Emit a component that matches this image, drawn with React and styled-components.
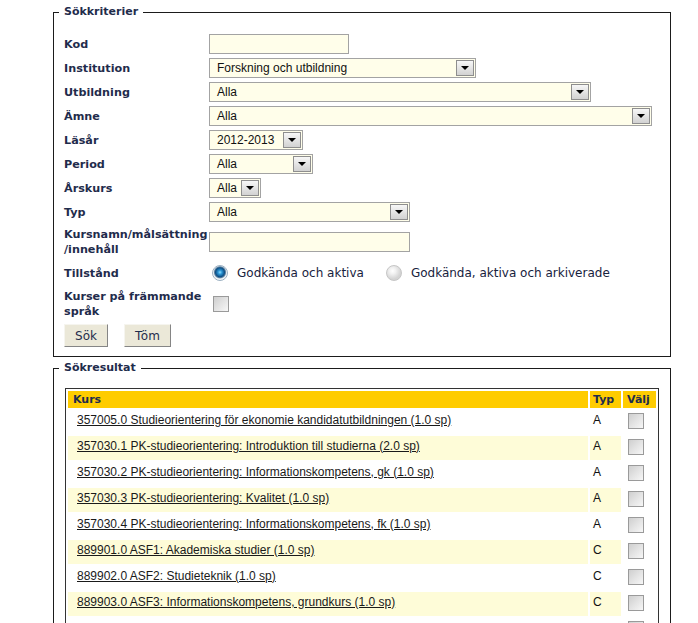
import React from 'react';
import styled, { createGlobalStyle } from 'styled-components';

const Global = createGlobalStyle`
  body {
    margin: 0;
    background: #fff;
    font-family: Verdana, "DejaVu Sans", sans-serif;
  }
`;

const navy = '#1f2c4c';

const Page = styled.div`
  padding-left: 53px;
  width: 618px;
`;

const Fieldset = styled.fieldset`
  width: 618px;
  box-sizing: border-box;
  margin: ${p => p.$top}px 0 0 0;
  padding: ${p => p.$pt}px 10px 9px 10px;
  border: 1px solid #1b1b1b;
  min-width: 0;
`;

const Legend = styled.legend`
  margin-left: -5px;
  padding: 0 5px 0 5px;
  font: bold 11px Verdana, "DejaVu Sans", sans-serif;
  color: ${navy};
  line-height: 14px;
`;

const Row = styled.div`
  display: grid;
  grid-template-columns: 145px auto;
  align-items: center;
  min-height: 24px;
  padding: ${p => p.$pad || '0'};
`;

const Label = styled.div`
  font: bold 11.2px Verdana, "DejaVu Sans", sans-serif;
  line-height: 15px;
  color: ${navy};
  white-space: nowrap;
`;

const Field = styled.div`
  display: flex;
  align-items: center;
`;

const TextInput = styled.div`
  width: ${p => p.$w}px;
  height: 20px;
  box-sizing: border-box;
  border: 1px solid #a3a3a3;
  background: #fffeea;
`;

const SelectBox = styled.div`
  display: flex;
  align-items: center;
  width: ${p => p.$w}px;
  height: 20px;
  box-sizing: border-box;
  border: 1px solid #a3a3a3;
  background: #fffeea;
`;

const SelectText = styled.span`
  flex: 1;
  padding-left: 7px;
  font: 12px Tahoma, "Liberation Sans", sans-serif;
  color: #111;
  white-space: nowrap;
`;

const ArrowBox = styled.span`
  width: 18px;
  height: 16px;
  margin-right: 1px;
  box-sizing: border-box;
  border: 1px solid #8e8e8e;
  background: linear-gradient(#f7f7f7, #d2d2d2);
  display: flex;
  align-items: center;
  justify-content: center;

  &::after {
    content: '';
    border-left: 4px solid transparent;
    border-right: 4px solid transparent;
    border-top: 4px solid #000;
  }
`;

const RadioGroup = styled.div`
  display: flex;
  align-items: center;
  padding-left: 3px;
`;

const RadioItem = styled.label`
  display: flex;
  align-items: center;
  gap: 9px;
  margin-right: 22px;
  font: 12px Verdana, "DejaVu Sans", sans-serif;
  color: #17223d;
`;

const RadioDot = styled.span`
  width: 16px;
  height: 16px;
  box-sizing: border-box;
  border-radius: 50%;
  border: 1px solid ${p => (p.$on ? '#9bb0c2' : '#c6c6c6')};
  background: ${p =>
    p.$on
      ? 'radial-gradient(circle at 50% 45%, #8fdcff 0, #2a95d4 2px, #0d4f86 4.5px, #5a7f9e 5.5px, #e9eef2 6.5px, #ffffff 8px)'
      : 'radial-gradient(circle at 40% 35%, #ffffff 0, #f2f2f2 3px, #d4d4d4 8px)'};
`;

const Check = styled.span`
  display: inline-block;
  width: 16px;
  height: 16px;
  box-sizing: border-box;
  border: 1px solid #9a9a9a;
  background: linear-gradient(135deg, #cfcfcf, #f7f7f7);
  margin-left: ${p => p.$ml || 0}px;
  vertical-align: middle;
`;

const Buttons = styled.div`
  display: flex;
  gap: 16px;
  margin-top: 3px;
`;

const Button = styled.button`
  width: ${p => p.$w}px;
  height: 23px;
  padding: 0;
  background: #ebe8d8;
  border: 1px solid;
  border-color: #f6f5ef #858585 #858585 #f6f5ef;
  font: 12px Verdana, "DejaVu Sans", sans-serif;
  color: ${navy};
`;

const Table = styled.table`
  width: 594px;
  margin-left: 1px;
  border: 1px solid #333;
  border-collapse: separate;
  border-spacing: 2px;
`;

const Th = styled.th`
  height: 16px;
  padding: 0 0 1px ${p => p.$pl}px;
  width: ${p => (p.$w ? `${p.$w}px` : 'auto')};
  background: #ffcc00;
  text-align: left;
  font: bold 11px Verdana, "DejaVu Sans", sans-serif;
  color: ${navy};
`;

const Td = styled.td`
  box-sizing: border-box;
  height: 24px;
  padding: 0 0 ${p => p.$pb}px ${p => p.$pl}px;
  vertical-align: middle;
  background: ${p => (p.$hl ? '#fefcd8' : 'transparent')};
  font: 12px Arial, "Liberation Sans", sans-serif;
  line-height: 14px;
  color: #111;
`;

const CourseLink = styled.a`
  color: #1a1a1a;
  text-decoration: underline;
`;

const courses = [
  ['357005.0 Studieorientering för ekonomie kandidatutbildningen (1.0 sp)', 'A'],
  ['357030.1 PK-studieorientering: Introduktion till studierna (2.0 sp)', 'A'],
  ['357030.2 PK-studieorientering: Informationskompetens, gk (1.0 sp)', 'A'],
  ['357030.3 PK-studieorientering: Kvalitet (1.0 sp)', 'A'],
  ['357030.4 PK-studieorientering: Informationskompetens, fk (1.0 sp)', 'A'],
  ['889901.0 ASF1: Akademiska studier (1.0 sp)', 'C'],
  ['889902.0 ASF2: Studieteknik (1.0 sp)', 'C'],
  ['889903.0 ASF3: Informationskompetens, grundkurs (1.0 sp)', 'C'],
  ['889904.0 ASF4: Informationskompetens, fortsättningskurs (1.0 sp)', 'C'],
];

const Select = ({ w, value }) => (
  <SelectBox $w={w}>
    <SelectText>{value}</SelectText>
    <ArrowBox />
  </SelectBox>
);

export default function App() {
  return (
    <Page>
      <Global />
      <Fieldset $top={5} $pt={13}>
        <Legend>Sökkriterier</Legend>
        <Row>
          <Label>Kod</Label>
          <Field><TextInput $w={140} /></Field>
        </Row>
        <Row>
          <Label>Institution</Label>
          <Field><Select w={267} value="Forskning och utbildning" /></Field>
        </Row>
        <Row>
          <Label>Utbildning</Label>
          <Field><Select w={382} value="Alla" /></Field>
        </Row>
        <Row>
          <Label>Ämne</Label>
          <Field><Select w={443} value="Alla" /></Field>
        </Row>
        <Row>
          <Label>Läsår</Label>
          <Field><Select w={94} value="2012-2013" /></Field>
        </Row>
        <Row>
          <Label>Period</Label>
          <Field><Select w={104} value="Alla" /></Field>
        </Row>
        <Row>
          <Label>Årskurs</Label>
          <Field><Select w={52} value="Alla" /></Field>
        </Row>
        <Row>
          <Label>Typ</Label>
          <Field><Select w={201} value="Alla" /></Field>
        </Row>
        <Row $pad="3px 0 4px">
          <Label>Kursnamn/målsättning<br />/innehåll</Label>
          <Field><TextInput $w={201} /></Field>
        </Row>
        <Row>
          <Label>Tillstånd</Label>
          <RadioGroup>
            <RadioItem><RadioDot $on />Godkända och aktiva</RadioItem>
            <RadioItem><RadioDot />Godkända, aktiva och arkiverade</RadioItem>
          </RadioGroup>
        </Row>
        <Row $pad="4px 0 2px">
          <Label>Kurser på främmande<br />språk</Label>
          <Field><Check $ml={4} /></Field>
        </Row>
        <Buttons>
          <Button $w={44}>Sök</Button>
          <Button $w={47}>Töm</Button>
        </Buttons>
      </Fieldset>

      <Fieldset $top={4} $pt={13}>
        <Legend>Sökresultat</Legend>
        <Table>
          <thead>
            <tr>
              <Th $pl={5}>Kurs</Th>
              <Th $pl={3} $w={28}>Typ</Th>
              <Th $pl={4} $w={29}>Välj</Th>
            </tr>
          </thead>
          <tbody>
            {courses.map(([name, typ], i) => (
              <tr key={name}>
                <Td $pl={9} $pb={5} $hl={i % 2 === 1}><CourseLink>{name}</CourseLink></Td>
                <Td $pl={3} $pb={5} $hl={i % 2 === 1}>{typ}</Td>
                <Td $pl={5} $pb={2}><Check /></Td>
              </tr>
            ))}
          </tbody>
        </Table>
      </Fieldset>
    </Page>
  );
}
